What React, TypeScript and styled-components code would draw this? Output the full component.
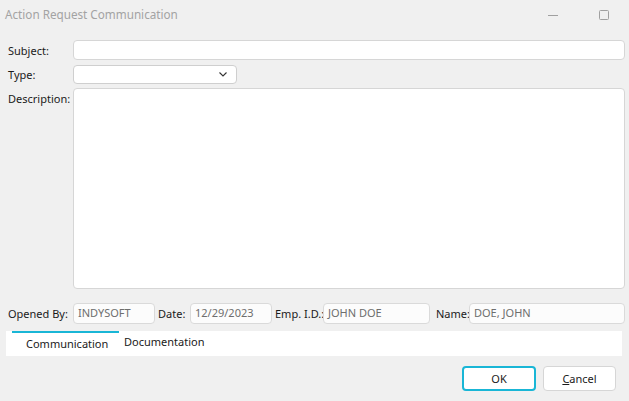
import React from "react";
import styled, { createGlobalStyle } from "styled-components";

const Global = createGlobalStyle`
  html, body { margin: 0; padding: 0; background: #f0f0f0; }
  body { font-family: "Noto Sans", "Open Sans", sans-serif; color: #1a1a1a; }
  * { box-sizing: border-box; }
`;

const Window = styled.div`
  width: 629px;
  height: 401px;
  background: #f0f0f0;
  display: flex;
  flex-direction: column;
  overflow: hidden;
`;

const TitleBar = styled.div`
  height: 30px;
  display: flex;
  align-items: center;
  padding-left: 5px;
`;

const Title = styled.div`
  flex: 1;
  font-size: 11.7px;
  color: #a3a3a3;
  margin-top: -2px;
`;

const WinButton = styled.div<{ $w: number; $mr: number }>`
  width: ${(p) => p.$w}px;
  height: 30px;
  margin-right: ${(p) => p.$mr}px;
  display: flex;
  align-items: center;
  justify-content: center;
`;

const Form = styled.div`
  padding: 10px 4px 0 8px;
  display: flex;
  flex-direction: column;
`;

const Row = styled.div<{ $top?: boolean; $mb: number }>`
  display: flex;
  align-items: ${(p) => (p.$top ? "flex-start" : "center")};
  margin-bottom: ${(p) => p.$mb}px;
`;

const Label = styled.div<{ $w?: number; $pt?: number }>`
  width: ${(p) => p.$w ?? 65}px;
  flex: none;
  font-size: 11px;
  color: #1a1a1a;
  padding-top: ${(p) => p.$pt ?? 0}px;
  white-space: nowrap;
`;

const Field = styled.div<{ $w?: number; $h: number }>`
  ${(p) => (p.$w ? `width: ${p.$w}px; flex: none;` : "flex: 1;")}
  height: ${(p) => p.$h}px;
  background: #fff;
  border: 1px solid #d6d6d6;
  border-radius: 4px;
`;

const Select = styled(Field)`
  display: flex;
  align-items: center;
  justify-content: flex-end;
  padding-right: 9px;
  border-color: #cfcfcf;
`;

const InfoRow = styled.div`
  display: flex;
  align-items: center;
  margin-top: 14px;
  height: 21px;
`;

const InfoField = styled.div<{ $w: number; $mr: number }>`
  width: ${(p) => p.$w}px;
  flex: none;
  height: 21px;
  margin-right: ${(p) => p.$mr}px;
  background: #fcfcfc;
  border: 1px solid #dadada;
  border-radius: 4px;
  font-size: 11px;
  color: #6e6e6e;
  padding: 1px 0 0 4px;
  line-height: 15px;
  white-space: nowrap;
`;

const TabBand = styled.div`
  margin: 7px 3px 0 -2px;
  height: 25px;
  background: #fff;
  display: flex;
  padding-left: 6px;
`;

const Tab = styled.div<{ $active?: boolean; $w: number }>`
  width: ${(p) => p.$w}px;
  font-size: 11px;
  color: #1a1a1a;
  border-top: 2px solid ${(p) => (p.$active ? "#19b6d6" : "transparent")};
  padding-top: ${(p) => (p.$active ? 3 : 1)}px;
  padding-left: ${(p) => (p.$active ? 14 : 5)}px;
  white-space: nowrap;
`;

const Buttons = styled.div`
  display: flex;
  justify-content: flex-end;
  gap: 7px;
  padding: 10px 13px 0 0;
`;

const Button = styled.div<{ $primary?: boolean }>`
  width: ${(p) => (p.$primary ? 74 : 73)}px;
  height: 25px;
  background: #fff;
  border: ${(p) => (p.$primary ? "2px solid #19b6d6" : "1px solid #d6d6d6")};
  border-radius: 4px;
  display: flex;
  align-items: center;
  justify-content: center;
  font-size: 11px;
  color: #1a1a1a;
  u { text-decoration: underline; }
`;

export default function App() {
  return (
    <Window>
      <Global />
      <TitleBar>
        <Title>Action Request Communication</Title>
        <WinButton $w={56} $mr={0}>
          <svg width="10" height="10" viewBox="0 0 10 10">
            <line x1="0" y1="5.5" x2="10" y2="5.5" stroke="#a0a0a0" strokeWidth="1" />
          </svg>
        </WinButton>
        <WinButton $w={46} $mr={2}>
          <svg width="10" height="10" viewBox="0 0 10 10">
            <rect x="0.5" y="0.5" width="9" height="9" rx="1" fill="none" stroke="#a0a0a0" strokeWidth="1" />
          </svg>
        </WinButton>
      </TitleBar>
      <Form>
        <Row $mb={5}>
          <Label>Subject:</Label>
          <Field $h={20} />
        </Row>
        <Row $mb={4}>
          <Label>Type:</Label>
          <Select $w={164} $h={19}>
            <svg width="8" height="5" viewBox="0 0 8 5">
              <polyline points="0.5,0.5 4,4 7.5,0.5" fill="none" stroke="#333" strokeWidth="1.1" />
            </svg>
          </Select>
        </Row>
        <Row $top $mb={0}>
          <Label $pt={3}>Description:</Label>
          <Field $h={201} />
        </Row>
        <InfoRow>
          <Label>Opened By:</Label>
          <InfoField $w={82} $mr={3}>INDYSOFT</InfoField>
          <Label $w={32}>Date:</Label>
          <InfoField $w={82} $mr={3}>12/29/2023</InfoField>
          <Label $w={48}>Emp. I.D.:</Label>
          <InfoField $w={107} $mr={6}>JOHN DOE</InfoField>
          <Label $w={33}>Name:</Label>
          <InfoField $w={156} $mr={0}>DOE, JOHN</InfoField>
        </InfoRow>
        <TabBand>
          <Tab $active $w={107}>Communication</Tab>
          <Tab $w={110}>Documentation</Tab>
        </TabBand>
      </Form>
      <Buttons>
        <Button $primary>OK</Button>
        <Button>
          <span>
            <u>C</u>ancel
          </span>
        </Button>
      </Buttons>
    </Window>
  );
}
